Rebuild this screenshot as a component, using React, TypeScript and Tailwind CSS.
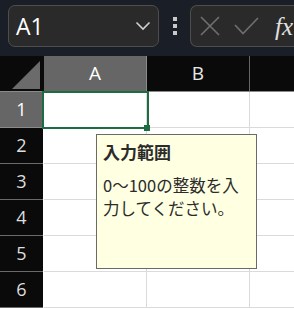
import React from "react";

const rows = [1, 2, 3, 4, 5, 6];

function Chevron() {
  return (
    <svg width="16" height="10" viewBox="0 0 16 10" fill="none">
      <path d="M1.5 1.5 L8 8 L14.5 1.5" stroke="#d0d0d0" strokeWidth="1.6" />
    </svg>
  );
}

function TopBar() {
  return (
    <div className="h-[56px] bg-[#1a1f27] flex items-start pt-[5px] pl-[8px] gap-0">
      <div className="w-[151px] h-[42px] rounded-[7px] border border-[#4d4d4d] bg-[#2a2a2a] flex items-center justify-between pl-[7px] pr-[7px]">
        <span className="text-[23px] text-white leading-none" style={{ fontFamily: '"Open Sans", sans-serif' }}>
          A1
        </span>
        <Chevron />
      </div>
      <div className="w-[31px] h-[42px] flex flex-col items-center justify-center gap-[3px]">
        <span className="w-[4px] h-[4px] bg-[#c8c8c8]" />
        <span className="w-[4px] h-[4px] bg-[#c8c8c8]" />
        <span className="w-[4px] h-[4px] bg-[#c8c8c8]" />
      </div>
      <div className="flex-1 h-[42px] rounded-l-[7px] border border-r-0 border-[#4d4d4d] bg-[#2a2a2a] flex items-center pl-[9px] gap-[14px] overflow-hidden">
        <svg width="20" height="20" viewBox="0 0 20 20" fill="none">
          <path d="M1 1 L19 19 M19 1 L1 19" stroke="#6e6e6e" strokeWidth="1.7" />
        </svg>
        <svg width="25" height="18" viewBox="0 0 25 18" fill="none">
          <path d="M1 8 L9 16.5 L24 1" stroke="#6e6e6e" strokeWidth="1.7" />
        </svg>
        <span
          className="text-[25px] italic text-[#e0e0e0] leading-none ml-[2px] whitespace-nowrap"
          style={{ fontFamily: '"Liberation Serif", serif' }}
        >
          fx
        </span>
      </div>
    </div>
  );
}

function HeaderRow() {
  return (
    <div className="flex h-[36px] border-b border-[#8a8a8a]">
      <div className="w-[43px] bg-[#0a0a0a] flex items-end justify-end pr-[3px] pb-[2px]">
        <svg width="28" height="28" viewBox="0 0 28 28">
          <polygon points="28,0 28,28 0,28" fill="#6b6b6b" />
        </svg>
      </div>
      <div className="w-[1px] bg-[#0a0a0a]" />
      <div className="w-[103px] bg-[#666666] flex items-center justify-center text-[19px] text-white border-r border-[#8a8a8a]">
        A
      </div>
      <div className="w-[103px] bg-[#0a0a0a] flex items-center justify-center text-[19px] text-[#e8e8e8] border-r border-[#666]">
        B
      </div>
      <div className="flex-1 bg-[#0a0a0a]" />
    </div>
  );
}

function Row({ n }: { n: number }) {
  const sel = n === 1;
  return (
    <div className="flex h-[36px]">
      <div
        className={
          sel
            ? "w-[43px] bg-[#666666] text-white flex items-center justify-center text-[18px] border-b border-[#8a8a8a]"
            : "w-[43px] bg-[#0a0a0a] text-[#dedede] flex items-center justify-center text-[18px] border-b border-[#6a6a6a]"
        }
      >
        {n}
      </div>
      <div className="w-[1px] bg-white" />
      <div className="w-[103px] bg-white border-r border-b border-[#dadada]" />
      <div className="w-[103px] bg-white border-r border-b border-[#dadada]" />
      <div className="flex-1 bg-white border-b border-[#dadada]" />
    </div>
  );
}

export default function App() {
  return (
    <div
      className="w-[294px] h-[309px] overflow-hidden relative bg-white"
      style={{ fontFamily: '"Open Sans", "Noto Sans CJK JP", sans-serif' }}
    >
      <TopBar />
      <HeaderRow />
      {rows.map((n) => (
        <Row key={n} n={n} />
      ))}

      {/* selection box on A1 */}
      <div className="absolute left-[42px] top-[91px] w-[107px] h-[38px] border-2 border-[#1e6c42]" />
      <div className="absolute left-[144px] top-[125px] w-[6px] h-[6px] bg-[#1e6c42]" />

      {/* input message */}
      <div
        className="absolute left-[96px] top-[134px] w-[161px] h-[135px] bg-[#ffffe2] border border-[#6a6a6a] px-[6px] pt-[6px] text-[#2b2b2b]"
        style={{ fontFamily: '"Noto Sans CJK JP", sans-serif' }}
      >
        <div className="text-[17px] font-bold leading-[22px]">入力範囲</div>
        <div className="text-[16.5px] leading-[23px] mt-[11px] whitespace-nowrap">
          0～100の整数を入
          <br />
          力してください。
        </div>
      </div>
    </div>
  );
}
